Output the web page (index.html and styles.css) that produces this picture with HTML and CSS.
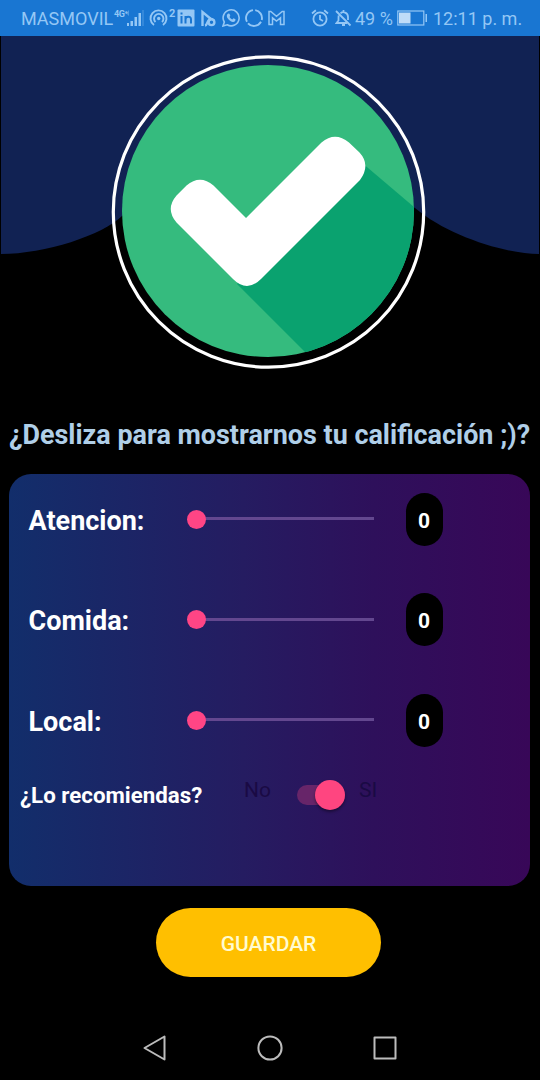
FILE: index.html
```html
<!DOCTYPE html>
<html lang="es">
<head>
<meta charset="utf-8">
<title>Calificación</title>
<link rel="stylesheet" href="styles.css">
</head>
<body>
<header class="status">
  <span class="carrier">MASMOVIL</span>
  <span class="network">4G⁺</span>
  <svg class="signal" width="18" height="18" viewBox="0 0 18 18" fill="currentColor"><path opacity=".45" d="M0 4l3-3v6zM16.500 1h1v16h-1z"/><path d="M1 14h2v3H1zM4.500 12H7v5H4.500zM8.500 8H11v9H8.500zM12.500 4H15v13h-2.500z"/></svg>
  <svg class="hotspot" width="20" height="18" viewBox="0 0 20 18" fill="none" stroke="currentColor" stroke-width="1.900"><path d="M5 16a8 8 0 1 1 9 0M6.500 13a4.700 4.700 0 1 1 6.500 0"/><circle cx="9.700" cy="9.500" r="1.700" fill="currentColor" stroke="none"/></svg>
  <sup class="devices">2</sup>
  <svg class="linkedin" width="18" height="18" viewBox="0 0 18 18"><rect x=".5" y=".5" width="17" height="17" rx="1" fill="currentColor"/><path d="M4.500 7v7.500M4.500 3.500v2M8.500 7v7.500M8.500 10.500c0-3.500 5.500-4 5.500 0v4" fill="none" stroke="#1976d2" stroke-width="2"/></svg>
  <svg class="app" width="16" height="18" viewBox="0 0 16 18" fill="none" stroke="currentColor" stroke-width="2.400"><path d="M1.500 17V3l8.500 7C6 10 7 16 4 16.500"/><circle cx="10.500" cy="13.200" r="2.900"/><path stroke-width="1.800" d="M8 8.500l5.500 3"/></svg>
  <svg class="whatsapp" width="18" height="18" viewBox="0 0 18 18"><path d="M1 17l1.300-4A8 8 0 1 1 5.200 15.800z" fill="none" stroke="currentColor" stroke-width="1.600"/><path d="M6.200 4.500l1.300.2.800 2-.8 1.200c.7 1.300 1.600 2 2.800 2.600l1.200-1.200 2 1c.2 1.700-1 2.700-2.500 2.600C8 12.500 5 9.500 4.800 7c0-1.200.6-2 1.400-2.500z" fill="currentColor"/></svg>
  <svg class="ring" width="18" height="18" viewBox="0 0 18 18" fill="none" stroke="currentColor" stroke-width="1.900"><path d="M10.200 1.100A8 8 0 0 1 16.700 11M16 12.800A8 8 0 0 1 3 14.300M2 12.800A8 8 0 0 1 8 1.100"/></svg>
  <svg class="mail" width="17" height="16" viewBox="0 0 17 16" fill="none" stroke="currentColor" stroke-width="1.500"><path d="M1 14.500V1.500h1.800l5.700 4.800 5.700-4.800H16v13h-3.500V7.800l-4 3.200-4-3.200v6.700z"/></svg>
  <svg class="alarm" width="18" height="18" viewBox="0 0 18 18" fill="none" stroke="currentColor" stroke-width="1.800"><circle cx="9" cy="10" r="6.600"/><path d="M9 6v4.300l3 1.700M1 4.500L4.800 1.300M17 4.500l-3.800-3.200"/></svg>
  <svg class="muted" width="17" height="18" viewBox="0 0 17 18" fill="none" stroke="currentColor" stroke-width="1.800"><path d="M1 2l14.500 14.500M5.500 4.300C8 2 13 3.500 13 8v3M3.700 6.500c-.3 1-.2 4-.2 5L1.500 14H12M8.500 1v2M7 16h3"/></svg>
  <span class="percent">49 %</span>
  <svg class="battery" width="31" height="16" viewBox="0 0 31 16"><rect x=".8" y="1" width="26" height="14" fill="none" stroke="currentColor" stroke-width="1.200"/><path fill="#bfdcf8" d="M2 2.500h11.500v11H2z"/><path fill="currentColor" d="M28.500 4H30v8h-1.500z"/></svg>
  <span class="clock">12:11 p. m.</span>
</header>

<main>
  <svg class="hero" width="540" height="364" viewBox="0 36 540 364">
    <defs><clipPath id="disc"><circle cx="268" cy="211" r="146"/></clipPath></defs>
    <path fill="#112253" d="M1 36H539V254C506 254 448 236 415 208L268 140L122 216C103 235 45 254 1 254z"/>
    <circle cx="268.500" cy="212" r="155.200" fill="none" stroke="#fff" stroke-width="3.200"/>
    <circle cx="268" cy="211" r="146" fill="#35bb7e"/>
    <path clip-path="url(#disc)" fill="#0aa26f" d="M361 162L414 207L450 400H353L237 284z"/>
    <path fill="#fff" d="M246 218L321.500 142.500Q335 131 349 142.500L359.500 152.500Q371 165 360 180L261 279Q247 293 233 279L176.500 222.500Q165 209 176.500 195.500L186.500 185.500Q200 174 213.500 185.500z"/>
  </svg>

  <h1 class="title">¿Desliza para mostrarnos tu calificación ;)?</h1>

  <section class="card">
    <div class="row"><span class="label">Atencion:</span><div class="slider"><i class="thumb"></i></div><output class="value">0</output></div>
    <div class="row"><span class="label">Comida:</span><div class="slider"><i class="thumb"></i></div><output class="value">0</output></div>
    <div class="row"><span class="label">Local:</span><div class="slider"><i class="thumb"></i></div><output class="value">0</output></div>
    <div class="recommend">
      <span class="question">¿Lo recomiendas?</span>
      <span class="option">No</span>
      <div class="switch"><i class="knob"></i></div>
      <span class="option">SI</span>
    </div>
  </section>

  <button class="save">GUARDAR</button>
</main>

<nav class="nav">
  <svg width="24" height="26" viewBox="0 0 24 26"><path d="M21.500 1.500v23L1.500 13z"/></svg>
  <svg width="26" height="26" viewBox="0 0 26 26"><circle cx="13" cy="13" r="11.600"/></svg>
  <svg width="24" height="24" viewBox="0 0 24 24"><rect x="1.500" y="1.500" width="21" height="21"/></svg>
</nav>
</body>
</html>
```
FILE: styles.css
```css
* { box-sizing: border-box; }
body { margin: 0; width: 540px; height: 1080px; display: flex; flex-direction: column; background: #000; color: #fff; font-family: Roboto, sans-serif; overflow: hidden; }
svg { display: block; flex: none; }
.status { height: 36px; flex: none; display: flex; align-items: center; padding-left: 21px; background: #1976d2; color: #94c7f5; font-size: 18px; line-height: 36px; white-space: nowrap; }
.carrier { width: 93px; padding-top: 2px; }
.network { width: 12px; font-size: 9px; font-weight: 700; line-height: 12px; margin-top: -9px; letter-spacing: -.5px; }
.signal { margin-left: 0; }
.hotspot { margin-left: 5px; }
.devices { width: 7px; font-size: 11px; font-weight: 700; line-height: 12px; margin-top: -8px; }
.linkedin { margin-left: 1px; }
.app { margin-left: 6px; }
.whatsapp { margin-left: 5px; }
.ring { margin-left: 5px; }
.mail { margin-left: 5px; }
.alarm { margin-left: 26px; }
.muted { margin-left: 6px; }
.percent { width: 38px; margin-left: 3px; padding-top: 2px; }
.battery { margin-left: 4px; }
.clock { margin-left: 5px; padding-top: 2px; }
main { display: flex; flex-direction: column; align-items: flex-start; }
.title { margin: 19px 0 0 9px; width: 521px; height: 54.5px; text-align: center; font-size: 26.95px; line-height: 32px; font-weight: 700; color: #b0cfe8; white-space: nowrap; }
.card { width: 521px; height: 412px; margin-left: 9px; border-radius: 22px; background: linear-gradient(90deg, #122e6b 0%, #251c61 45%, #2e105b 70%, #380758 100%); }
.row { height: 53px; margin: 19px 0 47.5px; padding-left: 19.5px; display: flex; align-items: center; }
.row + .row { margin-top: 0; }
.label { width: 158px; font-size: 27px; line-height: 32px; font-weight: 700; padding-top: 3px; }
.slider { width: 187px; height: 20px; display: flex; align-items: center; background: linear-gradient(#63478f, #63478f) 9px 8px / 178px 3px no-repeat; }
.thumb { width: 19px; height: 19px; border-radius: 50%; background: #ff4585; }
.value { width: 37px; height: 53px; margin-left: 32px; border-radius: 19px; background: #000; text-align: center; font-size: 21px; line-height: 56px; font-weight: 700; }
.recommend { height: 32px; margin-top: -15px; padding-left: 11px; display: flex; align-items: center; }
.question { width: 224px; font-size: 22.3px; font-weight: 700; }
.option { width: 53px; font-size: 21px; margin-top: -10px; color: #1a0a44; }
.switch { width: 48px; height: 20px; margin-right: 14px; display: flex; align-items: center; justify-content: flex-end; background: #672569; border-radius: 10px; }
.knob { width: 30px; height: 30px; border-radius: 50%; background: #ff4580; box-shadow: 0 2px 3px #0006; }
.save { width: 225px; height: 69px; margin: 22.5px 0 0 156px; border: 0; border-radius: 35px; background: #ffbf00; color: #fffbd0; font: 500 21px/69px Roboto, sans-serif; padding: 2px 0 0; }
.nav { height: 64px; margin-top: auto; padding: 0 143px; display: flex; align-items: center; justify-content: space-between; }
.nav svg { fill: none; stroke: #bcbcbc; stroke-width: 2; stroke-linejoin: round; }
```
